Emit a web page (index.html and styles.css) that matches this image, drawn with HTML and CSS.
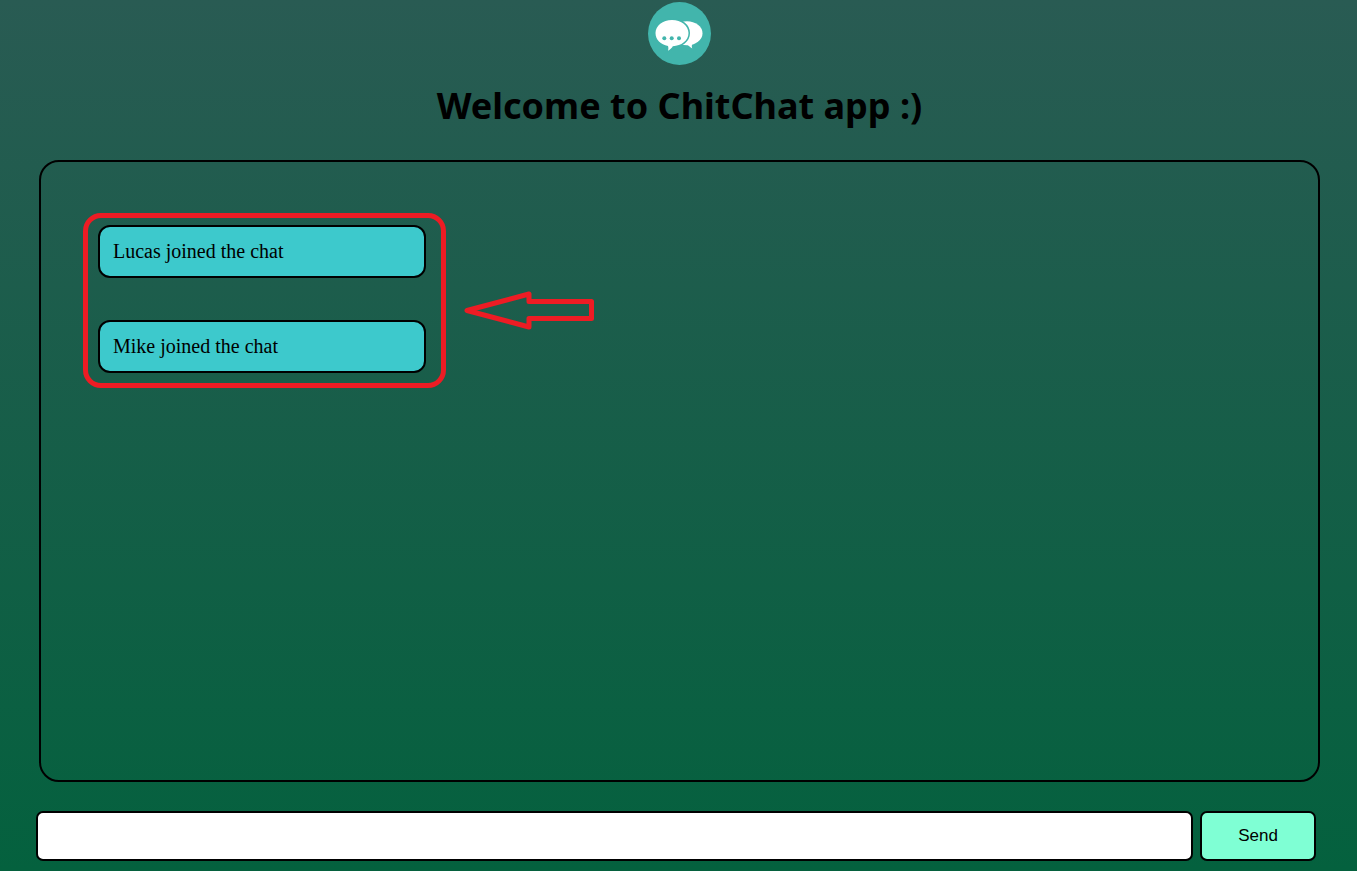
FILE: index.html
```html
<!DOCTYPE html>
<html lang="en">
<head>
<meta charset="utf-8">
<title>ChitChat</title>
<link rel="stylesheet" href="styles.css">
</head>
<body>
<header class="header">
  <svg class="logo" viewBox="0 0 63 63" aria-hidden="true">
    <circle cx="31.5" cy="31.5" r="31.5" fill="#42b5ac"/>
    <g fill="#fff">
      <ellipse cx="39" cy="31.300" rx="15.500" ry="12"/>
      <path d="M37.500 42c2 .8 4.200 2.600 6.800 4.600-.8-1.800-.6-3.400.2-5.600z"/>
      <path d="M24 18c9.300 0 16.500 5.600 16.500 13.100S33.300 44.200 24.800 44.200c-.9 1.600-2.300 3.200-4.900 4.500.7-1.600.6-3.200.1-4.800C12.700 42.700 7.500 37.800 7.500 31.100 7.500 23.600 14.700 18 24 18z" stroke="#42b5ac" stroke-width="3" paint-order="stroke"/>
    </g>
    <g fill="#42b5ac"><circle cx="16.300" cy="36.300" r="2"/><circle cx="23.700" cy="36.300" r="2"/><circle cx="31" cy="36.300" r="2"/></g>
  </svg>
  <h1 class="title">Welcome to ChitChat app :)</h1>
</header>
<main class="chat">
  <div class="messages">
    <p class="message">Lucas joined the chat</p>
    <p class="message">Mike joined the chat</p>
    <div class="highlight"></div>
    <svg class="arrow" viewBox="0 0 130 39" aria-hidden="true">
      <path d="M3 19.500 65 3v7.500h62.500v17H65V36z" fill="none" stroke="#ed1c24" stroke-width="5" stroke-linejoin="round"/>
    </svg>
  </div>
</main>
<form class="composer">
  <input class="composer-input" type="text" aria-label="Message">
  <button class="composer-send" type="button">Send</button>
</form>
</body>
</html>
```
FILE: styles.css
```css
* {
  box-sizing: border-box;
}

body {
  display: flex;
  flex-direction: column;
  min-height: 100vh;
  margin: 0;
  background: linear-gradient(#295b53, #04613e);
  color: #000;
}

.header {
  display: flex;
  flex-direction: column;
  align-items: center;
  gap: 16px;
  padding: 2px 0 29px 2px;
}

.logo {
  width: 63px;
  height: 63px;
}

.title {
  margin: 0;
  font: bold 36px/50px "Segoe UI", "Noto Sans", "Open Sans", sans-serif;
}

.chat {
  flex: 1;
  margin: 0 37px 0 39px;
  padding: 63px 57px;
  border: 2px solid #000;
  border-radius: 20px;
}

.messages {
  position: relative;
  display: flex;
  flex-direction: column;
  gap: 42px;
  width: 328px;
}

.message {
  margin: 0;
  padding: 12px 13px;
  border: 2px solid #000;
  border-radius: 12px;
  background: #3dc9cc;
  font: 20px/25px "Liberation Serif", "Times New Roman", serif;
}

.highlight {
  position: absolute;
  inset: -12px -20px -15px -15px;
  border: 5px solid #ed1c24;
  border-radius: 18px;
}

.arrow {
  position: absolute;
  top: 66px;
  left: 366px;
  width: 130px;
  height: 39px;
}

.composer {
  display: flex;
  gap: 7px;
  padding: 29px 41px 10px 36px;
}

.composer-input,
.composer-send {
  height: 50px;
  border: 2px solid #000;
  border-radius: 7px;
  font: 17px "Liberation Sans", Arial, sans-serif;
}

.composer-input {
  flex: 1;
  min-width: 0;
  padding: 0 12px;
  background: #fff;
}

.composer-send {
  width: 116px;
  background: #7fffd4;
  color: #000;
}
```
